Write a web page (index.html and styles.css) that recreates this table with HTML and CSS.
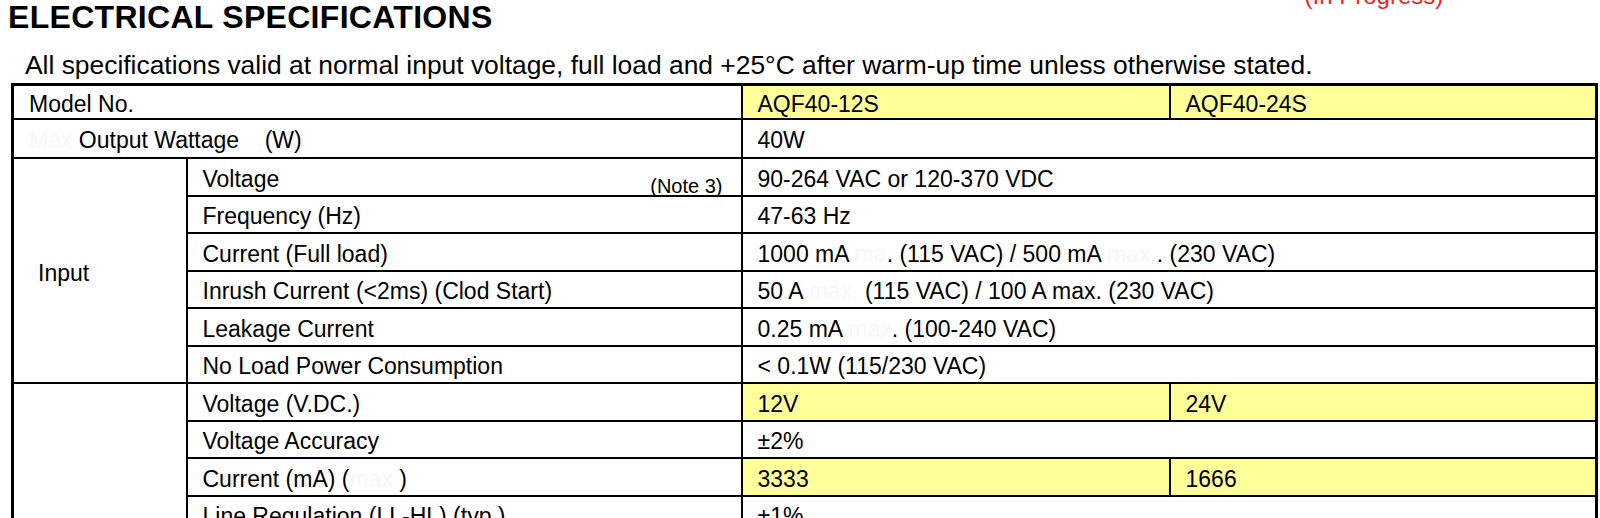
FILE: index.html
```html
<!DOCTYPE html>
<html lang="en">
<head>
<meta charset="utf-8">
<title>Electrical Specifications</title>
<link rel="stylesheet" href="styles.css">
</head>
<body>
<header class="head">
  <h1 class="title">ELECTRICAL SPECIFICATIONS</h1>
  <span class="status">(In Progress)</span>
</header>
<p class="intro">All specifications valid at normal input voltage, full load and +25°C after warm-up time unless otherwise stated.</p>
<table class="spec">
  <colgroup>
    <col class="c-group">
    <col class="c-param">
    <col class="c-val">
    <col class="c-val2">
  </colgroup>
  <tbody>
    <tr class="r-head">
      <td colspan="2">Model No.</td>
      <td class="hl">AQF40-12S</td>
      <td class="hl">AQF40-24S</td>
    </tr>
    <tr class="r-watt">
      <td colspan="2"><span class="redact">Max</span> Output Wattage&nbsp;&nbsp;&nbsp;&nbsp;(W)</td>
      <td colspan="2">40W</td>
    </tr>
    <tr>
      <td rowspan="6" class="group">Input</td>
      <td><div class="param-note"><span>Voltage</span><span class="note">(Note 3)</span></div></td>
      <td colspan="2">90-264 VAC or 120-370 VDC</td>
    </tr>
    <tr>
      <td>Frequency (Hz)</td>
      <td colspan="2">47-63 Hz</td>
    </tr>
    <tr>
      <td>Current (Full load)</td>
      <td colspan="2">1000 mA <span class="redact">ma</span>. (115 VAC) / 500 mA <span class="redact">max&nbsp;</span>. (230 VAC)</td>
    </tr>
    <tr>
      <td>Inrush Current (&lt;2ms) (Clod Start)</td>
      <td colspan="2">50 A <span class="redact">max.</span> (115 VAC) / 100 A max. (230 VAC)</td>
    </tr>
    <tr>
      <td>Leakage Current</td>
      <td colspan="2">0.25 mA <span class="redact">max</span>. (100-240 VAC)</td>
    </tr>
    <tr>
      <td>No Load Power Consumption</td>
      <td colspan="2">&lt; 0.1W (115/230 VAC)</td>
    </tr>
    <tr>
      <td rowspan="4" class="group"></td>
      <td>Voltage (V.DC.)</td>
      <td class="hl">12V</td>
      <td class="hl">24V</td>
    </tr>
    <tr>
      <td>Voltage Accuracy</td>
      <td colspan="2">±2%</td>
    </tr>
    <tr>
      <td>Current (mA) (<span class="redact">max.</span>)</td>
      <td class="hl">3333</td>
      <td class="hl">1666</td>
    </tr>
    <tr>
      <td>Line Regulation (LL-HL) (typ.)</td>
      <td colspan="2">±1%</td>
    </tr>
  </tbody>
</table>
</body>
</html>
```
FILE: styles.css
```css
html, body {
  background: #ffffff;
}
body {
  margin: 0 0 0 8px;
  font-family: "Liberation Sans", Arial, sans-serif;
  color: #000000;
  overflow: hidden;
}
.head {
  display: flex;
  align-items: flex-start;
  height: 42px;
}
.title {
  margin: 0;
  font-size: 32px;
  line-height: 34px;
  font-weight: bold;
  letter-spacing: 0.3px;
}
.status {
  margin-left: 812px;
  margin-top: -17px;
  color: #ff1a1a;
  font-size: 24px;
  line-height: 26px;
}
.intro {
  margin: 3px 0 0 17px;
  font-size: 26.4px;
  line-height: 41px;
  height: 38px;
}
.spec {
  margin-left: 3px;
  border-collapse: collapse;
  width: 1584px;
  table-layout: fixed;
  border: 3px solid #000;
  font-size: 23px;
}
.c-group { width: 174px; }
.c-param { width: 555px; }
.c-val { width: 428px; }
.c-val2 { width: 427px; }
.spec td {
  border: 2px solid #000;
  height: 37.5px;
  padding: 4px 15px 0 15px;
  box-sizing: border-box;
  vertical-align: middle;
  white-space: nowrap;
  line-height: 26px;
}
.spec .r-head td {
  height: 34px;
}
.spec .r-watt td {
  height: 39.5px;
}
.spec td.hl {
  background: #ffff99;
}
.spec td.group {
  padding-left: 24px;
}
.param-note {
  display: flex;
  justify-content: space-between;
  align-items: flex-end;
  margin-right: 3px;
}
.note {
  font-size: 20px;
  line-height: 20px;
  transform: translateY(4px);
}
.redact {
  color: #f8f8f8;
}
```
